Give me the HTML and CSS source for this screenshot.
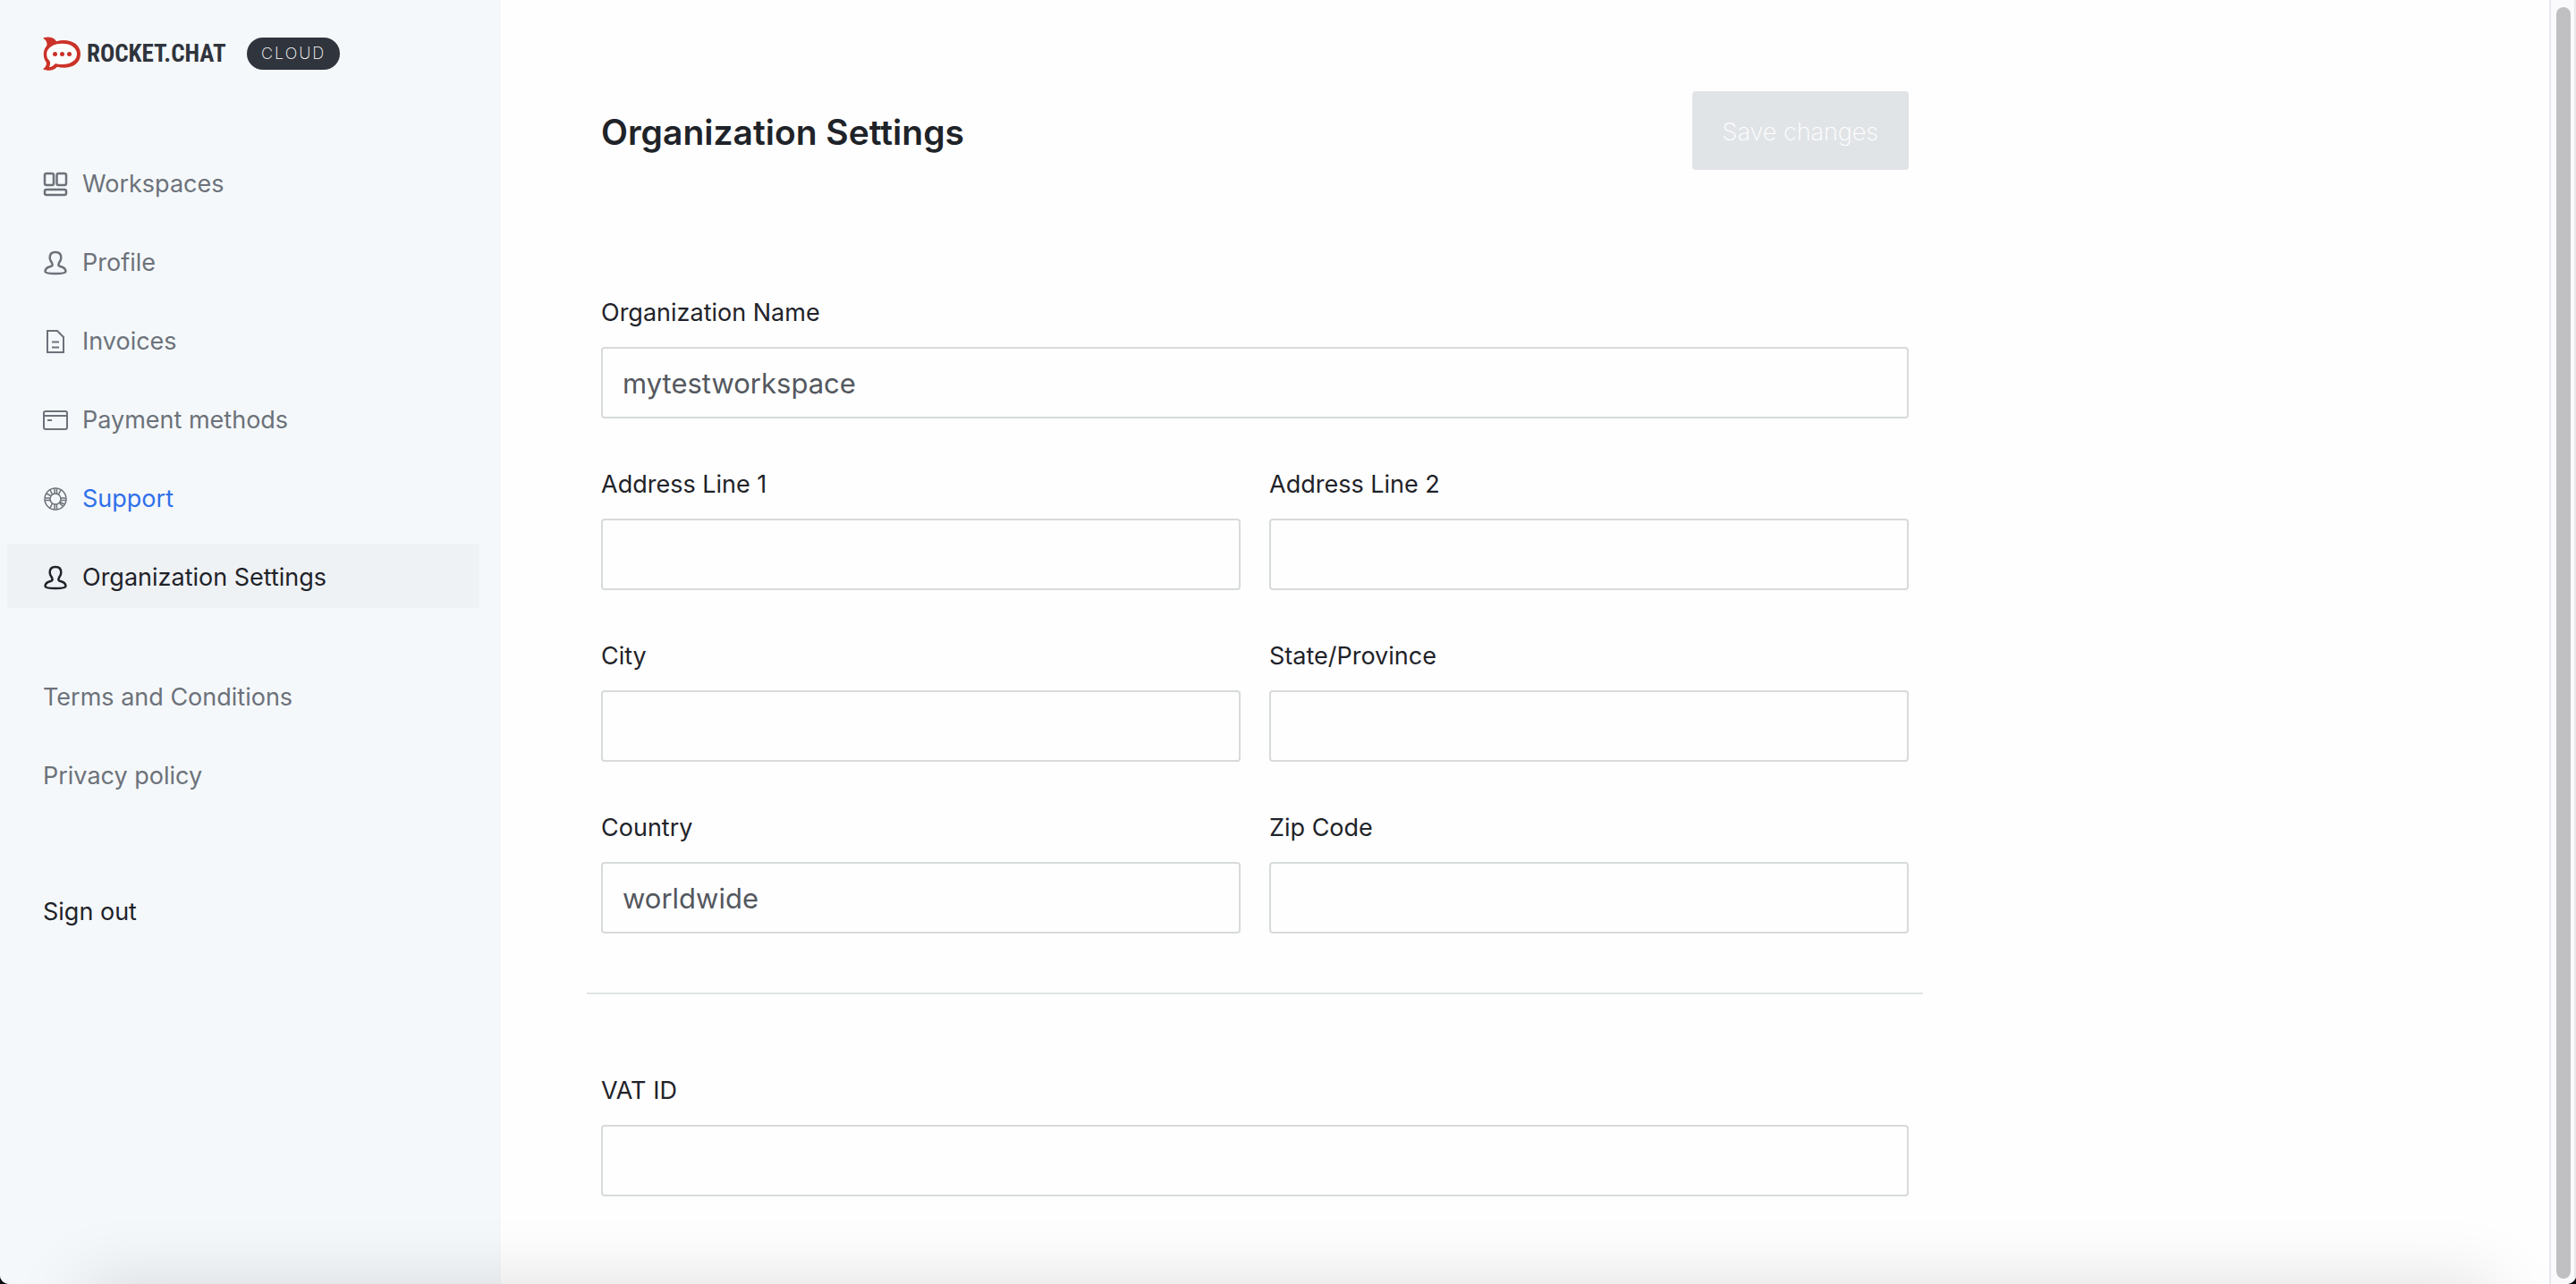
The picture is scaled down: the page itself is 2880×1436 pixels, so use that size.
FILE: index.html
```html
<!DOCTYPE html>
<html lang="en">
<head>
<meta charset="utf-8">
<title>Organization Settings</title>
<link rel="stylesheet" href="styles.css">
</head>
<body>
<div class="shell">
  <aside class="sidebar">
    <a class="brand" href="#">
      <svg class="brand-mark" viewBox="0 0 42 38" aria-hidden="true">
        <path fill="#cb3229" d="M0 1.5C5-.5 12 0 15 5.2C27 1.500 42 6 42 19.500C42 32.500 28 37 16 33.800C12 38.500 5 38.500 0 36.200C3.500 34 4.500 31 3.600 28.500C-.5 23 0 15 4 10.500C5.500 7 3.500 4 0 1.500Z"/>
        <path fill="#fdfefe" d="M21.500 7.800C31 7.800 38 12.500 38 19.400C38 26.300 31 30.900 21.500 30.900C18.500 30.900 16 30.500 14 29.900C12 31.800 10 34 7 34C8.300 31.500 8.800 28.500 6.800 26.200C4.500 24.200 4.200 21.800 4.200 19.400C4.200 12.500 12 7.800 21.500 7.800Z"/>
        <circle cx="13.500" cy="19.500" r="2.500" fill="#cb3229"/>
        <circle cx="21.500" cy="19.500" r="2.500" fill="#cb3229"/>
        <circle cx="29.500" cy="19.500" r="2.500" fill="#cb3229"/>
      </svg>
      <span class="brand-name">ROCKET.CHAT</span>
      <span class="brand-tag">CLOUD</span>
    </a>

    <nav class="nav" aria-label="Main">
      <a class="nav-item" href="#">
        <svg class="icon" viewBox="0 0 28 28" stroke-width="2.500" aria-hidden="true"><rect x="2" y="2" width="10" height="13" rx="2"/><rect x="15.500" y="2" width="10.500" height="13" rx="2"/><rect x="2" y="20" width="24" height="6" rx="2"/></svg>
        Workspaces
      </a>
      <a class="nav-item" href="#">
        <svg class="icon" viewBox="0 0 28 28" stroke-width="2.500" aria-hidden="true"><path d="M14 2C18 2 20.300 4.500 20.300 8.200C20.300 11 19 12.300 18 14C16.800 16.500 17.500 17.500 19.500 18C23.500 19 25.500 20.500 25.500 23.500C25.500 25.500 20 26 14 26S2.500 25.500 2.500 23.500C2.500 20.500 4.500 19 8.500 18C10.500 17.500 11.200 16.500 10 14C9 12.300 7.700 11 7.700 8.200C7.700 4.500 10 2 14 2Z"/></svg>
        Profile
      </a>
      <a class="nav-item" href="#">
        <svg class="icon" viewBox="0 0 28 28" stroke-width="2" aria-hidden="true"><path d="M5 2H16L23 9V26H5ZM10 14.500H18M10 20.500H18"/></svg>
        Invoices
      </a>
      <a class="nav-item" href="#">
        <svg class="icon" viewBox="0 0 28 28" stroke-width="2" aria-hidden="true"><rect x="1" y="4" width="26" height="20" rx="2"/><path d="M1 9H27M5 14H10"/></svg>
        Payment methods
      </a>
      <a class="nav-item nav-item-link" href="#">
        <svg class="icon icon-muted" viewBox="0 0 28 28" stroke-width="1.500" aria-hidden="true"><circle cx="14" cy="14" r="12"/><circle cx="14" cy="14" r="6"/><path d="M13 2.500V8M15.500 2.500V8M13 20V25.500M15.500 20V25.500M2.500 13H8M2.500 15.500H8M20 13H25.500M20 15.500H25.500M20 4L17.500 8.800M8 4L10.500 8.800M4 8L8.800 10.500M24 20L19.200 17.500M8 24L10.500 19.200M22 22L18.200 18.200"/></svg>
        Support
      </a>
      <a class="nav-item nav-item-active" href="#" aria-current="page">
        <svg class="icon" viewBox="0 0 28 28" stroke-width="2.500" aria-hidden="true"><path d="M14 2C18 2 20.300 4.500 20.300 8.200C20.300 11 19 12.300 18 14C16.800 16.500 17.500 17.500 19.500 18C23.500 19 25.500 20.500 25.500 23.500C25.500 25.500 20 26 14 26S2.500 25.500 2.500 23.500C2.500 20.500 4.500 19 8.500 18C10.500 17.500 11.200 16.500 10 14C9 12.300 7.700 11 7.700 8.200C7.700 4.500 10 2 14 2Z"/></svg>
        Organization Settings
      </a>
    </nav>

    <nav class="nav nav-legal" aria-label="Legal">
      <a class="nav-item" href="#">Terms and Conditions</a>
      <a class="nav-item" href="#">Privacy policy</a>
    </nav>

    <div class="nav nav-session">
      <a class="nav-item nav-item-strong" href="#">Sign out</a>
    </div>
  </aside>

  <main class="main">
    <form class="settings">
      <header class="settings-header">
        <h1 class="title">Organization Settings</h1>
        <button class="save" type="submit" disabled>Save changes</button>
      </header>

      <div class="fields">
        <div class="field field-wide">
          <label for="org-name">Organization Name</label>
          <input id="org-name" type="text" value="mytestworkspace">
        </div>
        <div class="field">
          <label for="address-1">Address Line 1</label>
          <input id="address-1" type="text">
        </div>
        <div class="field">
          <label for="address-2">Address Line 2</label>
          <input id="address-2" type="text">
        </div>
        <div class="field">
          <label for="city">City</label>
          <input id="city" type="text">
        </div>
        <div class="field">
          <label for="state">State/Province</label>
          <input id="state" type="text">
        </div>
        <div class="field">
          <label for="country">Country</label>
          <input id="country" type="text" value="worldwide">
        </div>
        <div class="field">
          <label for="zip">Zip Code</label>
          <input id="zip" type="text">
        </div>
      </div>

      <hr class="divider">

      <div class="fields">
        <div class="field field-wide">
          <label for="vat">VAT ID</label>
          <input id="vat" type="text">
        </div>
      </div>
    </form>
  </main>

  <div class="scrollbar" aria-hidden="true"><div class="scrollbar-thumb"></div></div>
</div>
</body>
</html>
```
FILE: styles.css
```css
* {
  box-sizing: border-box;
}

html {
  background: #05090f;
}

body {
  margin: 0;
  font-family: Inter, "Liberation Sans", sans-serif;
  font-size: 27px;
  line-height: 36px;
  color: #1f2329;
}

.shell {
  position: relative;
  display: flex;
  min-height: 100vh;
  overflow: hidden;
  background: #fefefe;
  border-radius: 0 0 10px 10px;
}

/* soft shade rising from the bottom edge of the window */
.shell::after {
  content: "";
  position: absolute;
  top: 100%;
  left: 92px;
  right: 92px;
  height: 200px;
  box-shadow: 0 0 80px rgba(0, 0, 0, 0.13);
  pointer-events: none;
}

.sidebar {
  flex: 0 0 560px;
  padding: 40px 24px 40px 8px;
  background: #f5f8fa;
}

.brand {
  display: flex;
  align-items: center;
  height: 40px;
  padding-left: 40px;
  color: #2f343d;
  text-decoration: none;
}

.brand-mark {
  width: 42px;
  height: 38px;
}

.brand-name {
  width: 156px;
  margin-left: 7px;
  font-family: "Roboto Condensed", "Liberation Sans Narrow", "Liberation Sans", sans-serif;
  font-size: 27px;
  font-weight: 700;
  white-space: nowrap;
}

.brand-tag {
  margin-left: 23px;
  padding: 0 16px;
  border-radius: 18px;
  background: #2f343d;
  color: #fff;
  font-size: 18px;
  font-weight: 200;
  letter-spacing: 2px;
}

.nav {
  display: flex;
  flex-direction: column;
  gap: 16px;
  margin-top: 88px;
}

.nav-legal {
  margin-top: 62px;
}

.nav-session {
  margin-top: 80px;
}

.nav-item {
  display: flex;
  align-items: center;
  gap: 16px;
  height: 72px;
  padding: 4px 40px 0;
  border-radius: 4px;
  color: #6c727a;
  text-decoration: none;
}

.nav-item-link {
  color: #2f70ea;
}

.nav-item-active {
  background: #eff2f5;
}

.nav-item-active,
.nav-item-strong {
  color: #1f2329;
}

.icon {
  width: 28px;
  height: 28px;
  fill: none;
  stroke: currentColor;
}

.icon-muted {
  color: #6c727a;
}

.main {
  flex: 1;
  min-width: 0;
  padding: 102px 112px 64px;
}

.settings {
  max-width: 1462px;
}

.settings-header {
  display: flex;
  align-items: center;
  justify-content: space-between;
  margin-bottom: 142px;
}

.title {
  margin: 0;
  padding-top: 4px;
  font-size: 39px;
  line-height: 48px;
  font-weight: 600;
}

.save {
  height: 88px;
  padding: 4px 34px 0;
  border: 0;
  border-radius: 4px;
  background: #e1e4e7;
  color: #fff;
  font: inherit;
  font-weight: 200;
}

.fields {
  display: grid;
  grid-template-columns: 1fr 1fr;
  gap: 56px 32px;
}

.field {
  display: flex;
  flex-direction: column;
  gap: 20px;
}

.field-wide {
  grid-column: 1 / -1;
}

.field input {
  width: 100%;
  height: 80px;
  padding: 0 22px;
  border: 2px solid #d7dadb;
  border-radius: 4px;
  background: #fefefe;
  color: #54585e;
  font: inherit;
  font-size: 31px;
}

.divider {
  height: 2px;
  margin: 66px -16px 90px;
  border: 0;
  background: #e1e4e5;
}

.scrollbar {
  display: flex;
  flex: 0 0 30px;
  padding: 8px 4px 6px 6px;
  border: solid #e6e8eb;
  border-width: 0 2px;
  background: #fafafc;
}

.scrollbar-thumb {
  flex: 1;
  border-radius: 8px;
  background: #c0c0c2;
}
```
